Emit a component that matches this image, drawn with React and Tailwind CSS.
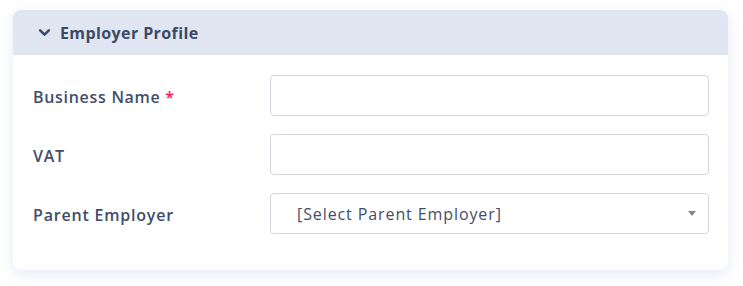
export default function App() {
  const font = { fontFamily: '"Open Sans", "Noto Sans", Arial, sans-serif' };

  return (
    <div className="min-h-screen bg-white pt-[10px] pl-[13px] pr-[15px]" style={font}>
      <div className="w-[715px] rounded-lg bg-white shadow-[0_4px_14px_rgba(60,80,170,0.12)] overflow-hidden">
        <div className="flex items-center h-[45px] bg-[#e0e6f1] pl-[25px] gap-[9px]">
          <svg width="13" height="13" viewBox="0 0 12 12" className="text-[#3b4a66]">
            <path d="M2 4 L6 8 L10 4" fill="none" stroke="currentColor" strokeWidth="2.4" strokeLinecap="round" strokeLinejoin="round" />
          </svg>
          <span className="text-[16px] font-bold text-[#3b4a66] tracking-[0.4px]">Employer Profile</span>
        </div>

        <div className="pt-[20px] pb-[36px] pl-[20px] flex flex-col gap-[18px]">
          <div className="flex items-center">
            <label className="w-[237px] pt-[2px] text-[16px] font-semibold text-[#3f4d6b] tracking-[0.7px]">
              Business Name <span className="text-[#ff1a4b]">*</span>
            </label>
            <input className="w-[439px] h-[41px] rounded border border-[#d2d5dc] bg-white outline-none px-3" />
          </div>

          <div className="flex items-center">
            <label className="w-[237px] pt-[2px] text-[16px] font-semibold text-[#3f4d6b] tracking-[0.7px]">VAT</label>
            <input className="w-[439px] h-[41px] rounded border border-[#d2d5dc] bg-white outline-none px-3" />
          </div>

          <div className="flex items-center">
            <label className="w-[237px] pt-[2px] text-[16px] font-semibold text-[#3f4d6b] tracking-[0.8px]">Parent Employer</label>
            <div className="w-[439px] h-[41px] rounded border border-[#d2d5dc] bg-white flex items-center justify-between pl-[26px] pr-[12px]">
              <span className="pt-[1px] text-[16px] text-[#3f4d6b] tracking-[0.9px]">[Select Parent Employer]</span>
              <svg width="8" height="5" viewBox="0 0 8 5">
                <path d="M0 0 H8 L4 5 Z" fill="#888" />
              </svg>
            </div>
          </div>
        </div>
      </div>
    </div>
  );
}
